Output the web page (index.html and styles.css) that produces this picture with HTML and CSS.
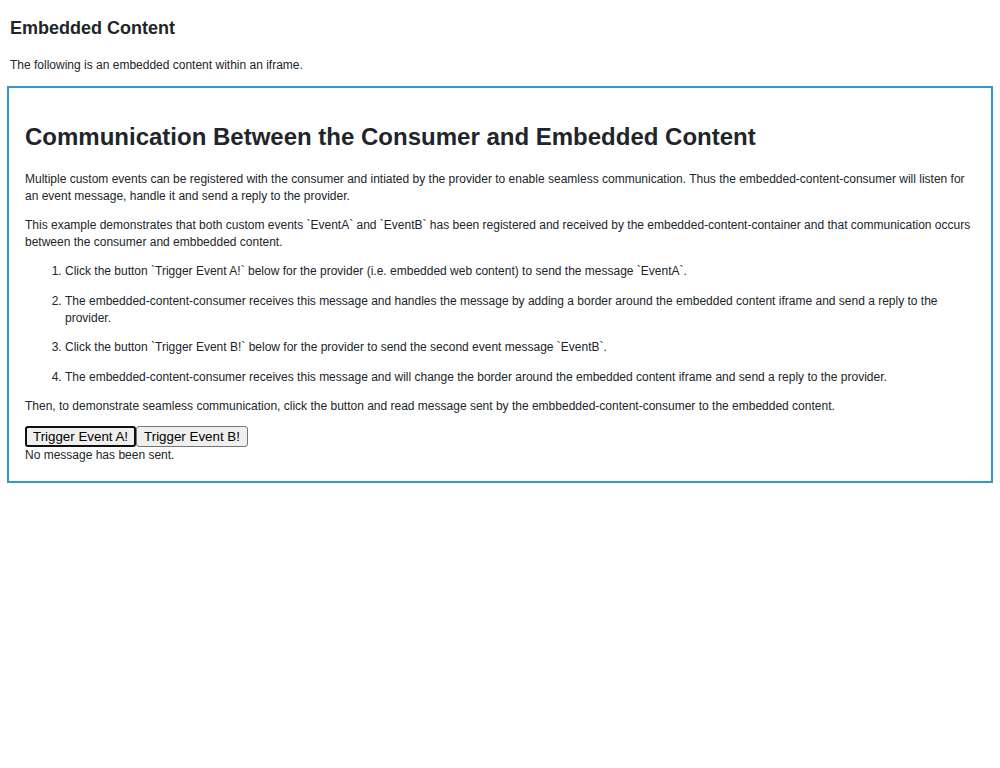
FILE: index.html
```html
<!DOCTYPE html>
<html>
<head>
<meta charset="utf-8">
<link rel="stylesheet" href="styles.css">
</head>
<body>
<div class="page">
  <h2 class="title">Embedded Content</h2>
  <p class="intro">The following is an embedded content within an iframe.</p>
  <div class="frame">
    <h1 class="heading">Communication Between the Consumer and Embedded Content</h1>
    <p>Multiple custom events can be registered with the consumer and intiated by the provider to enable seamless communication. Thus the embedded-content-consumer will listen for an event message, handle it and send a reply to the provider.</p>
    <p>This example demonstrates that both custom events `EventA` and `EventB` has been registered and received by the embedded-content-container and that communication occurs between the consumer and embbedded content.</p>
    <ol class="steps">
      <li>Click the button `Trigger Event A!` below for the provider (i.e. embedded web content) to send the message `EventA`.</li>
      <li>The embedded-content-consumer receives this message and handles the message by adding a border around the embedded content iframe and send a reply to the provider.</li>
      <li>Click the button `Trigger Event B!` below for the provider to send the second event message `EventB`.</li>
      <li>The embedded-content-consumer receives this message and will change the border around the embedded content iframe and send a reply to the provider.</li>
    </ol>
    <p class="then">Then, to demonstrate seamless communication, click the button and read message sent by the embbedded-content-consumer to the embedded content.</p>
    <div class="actions">
      <button class="btn btn-focus">Trigger Event A!</button><button class="btn">Trigger Event B!</button>
    </div>
    <div class="status">No message has been sent.</div>
  </div>
</div>
</body>
</html>
```
FILE: styles.css
```css
html, body {
  margin: 0;
  padding: 0;
  background: #fff;
}
body {
  font-family: "Liberation Sans", Arial, sans-serif;
  color: #212529;
  font-size: 12px;
  line-height: 17px;
}
.page {
  padding: 17px 10px 0 10px;
}
.title {
  font-size: 18px;
  line-height: 22px;
  font-weight: bold;
  margin: 0 0 18px 0;
}
.intro {
  margin: 0 0 12px 0;
}
.frame {
  margin: 0 -3px;
  border: 2px solid #3399cc;
  padding: 35px 16px 17px 16px;
}
.heading {
  font-size: 24px;
  line-height: 28px;
  font-weight: bold;
  margin: 0 0 20px 0;
}
.frame p {
  margin: 0 0 12px 0;
}
.frame p.then {
  margin-bottom: 11px;
}
.steps {
  margin: 0;
  padding-left: 40px;
}
.steps li {
  margin-bottom: 12.5px;
}
.actions {
  display: flex;
}
.btn {
  font-family: "Liberation Sans", Arial, sans-serif;
  font-size: 13.33px;
  line-height: 15px;
  color: #000;
  background: #efefef;
  border: 1px solid #767676;
  border-radius: 3px;
  padding: 2px 7px;
  margin: 0;
}
.btn-focus {
  border: 2px solid #101010;
  padding: 1px 6px;
}
.status {
  line-height: 17px;
}
```
